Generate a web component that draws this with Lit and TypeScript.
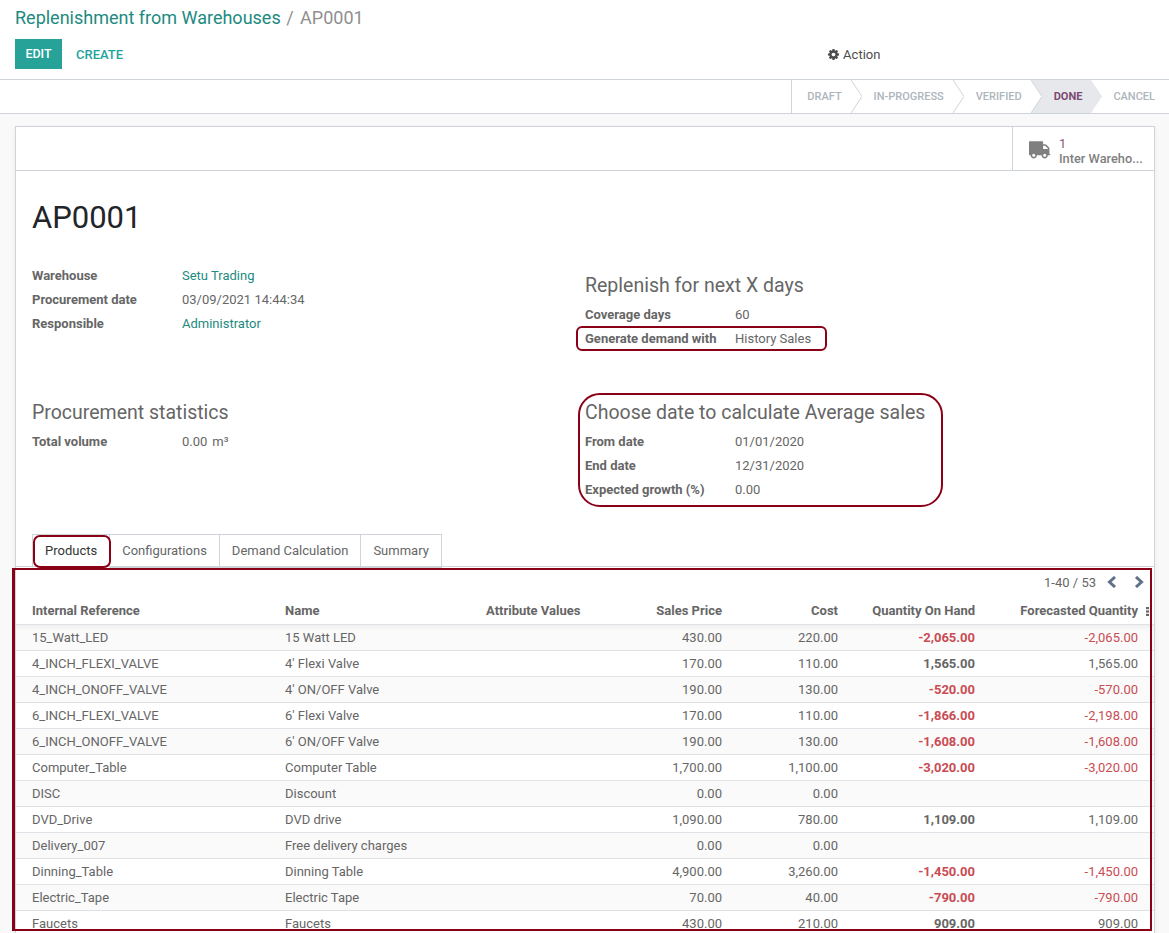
import {LitElement, html, css, svg} from 'lit';
import {customElement} from 'lit/decorators.js';

const GEAR = 'M1152 896q0-106-75-181t-181-75-181 75-75 181 75 181 181 75 181-75 75-181zm512-109v222q0 12-8 23t-20 13l-185 28q-19 54-39 91 35 50 107 138 10 12 10 25t-9 23q-27 37-99 108t-94 71q-12 0-26-9l-138-108q-44 23-91 38-16 136-29 186-7 28-36 28h-222q-14 0-24.5-8.5t-11.5-21.5l-28-184q-49-16-90-37l-141 107q-10 9-25 9-14 0-25-11-126-114-165-168-7-10-7-23 0-12 8-23 15-21 51-66.5t54-70.5q-27-50-41-99l-183-27q-13-2-21-12.5t-8-23.5v-222q0-12 8-23t19-13l186-28q14-46 39-92-40-57-107-138-10-12-10-24 0-10 9-23 26-36 98.5-107.5t94.5-71.5q13 0 26 10l138 107q44-23 91-38 16-136 29-186 7-28 36-28h222q14 0 24.5 8.5t11.5 21.5l28 184q49 16 90 37l142-107q9-9 24-9 13 0 25 10 129 119 165 170 7 8 7 22 0 12-8 23-15 21-51 66.5t-54 70.5q26 50 41 98l183 28q13 2 21 12.5t8 23.5z';
const TRUCK = 'M640 1408q0-52-38-90t-90-38-90 38-38 90 38 90 90 38 90-38 38-90zm-384-512h384v-256h-158q-13 0-22 9l-195 195q-9 9-9 22v30zm1280 512q0-52-38-90t-90-38-90 38-38 90 38 90 90 38 90-38 38-90zm256-1088v1024q0 15-4 26.5t-13.5 18.5-16.5 11.5-23.5 6-22.5 2-25.5 0-22.5-.5q0 106-75 181t-181 75-181-75-75-181h-384q0 106-75 181t-181 75-181-75-75-181h-64q-3 0-22.5.5t-25.5 0-22.5-2-23.5-6-16.5-11.5-13.5-18.5-4-26.5q0-26 19-45t45-19v-320q0-8-.5-35t0-38 2.5-34.5 6.5-37 14-30.5 22.5-30l198-198q19-19 50.5-32t58.5-13h160v-192q0-26 19-45t45-19h1024q26 0 45 19t19 45z';

type Row = [string, string, string, string, string, string];

const ROWS: Row[] = [
  ['15_Watt_LED', '15 Watt LED', '430.00', '220.00', '-2,065.00', '-2,065.00'],
  ['4_INCH_FLEXI_VALVE', "4' Flexi Valve", '170.00', '110.00', '1,565.00', '1,565.00'],
  ['4_INCH_ONOFF_VALVE', "4' ON/OFF Valve", '190.00', '130.00', '-520.00', '-570.00'],
  ['6_INCH_FLEXI_VALVE', "6' Flexi Valve", '170.00', '110.00', '-1,866.00', '-2,198.00'],
  ['6_INCH_ONOFF_VALVE', "6' ON/OFF Valve", '190.00', '130.00', '-1,608.00', '-1,608.00'],
  ['Computer_Table', 'Computer Table', '1,700.00', '1,100.00', '-3,020.00', '-3,020.00'],
  ['DISC', 'Discount', '0.00', '0.00', '', ''],
  ['DVD_Drive', 'DVD drive', '1,090.00', '780.00', '1,109.00', '1,109.00'],
  ['Delivery_007', 'Free delivery charges', '0.00', '0.00', '', ''],
  ['Dinning_Table', 'Dinning Table', '4,900.00', '3,260.00', '-1,450.00', '-1,450.00'],
  ['Electric_Tape', 'Electric Tape', '70.00', '40.00', '-790.00', '-790.00'],
  ['Faucets', 'Faucets', '430.00', '210.00', '909.00', '909.00'],
];

const STAGES = ['DRAFT', 'IN-PROGRESS', 'VERIFIED', 'DONE', 'CANCEL'];

@customElement('app-root')
export class AppRoot extends LitElement {
  static styles = css`
    :host {
      display: block;
      font-family: Roboto, 'Liberation Sans', sans-serif;
      font-size: 13px;
      color: #666;
    }
    .page {
      position: relative;
      height: 933px;
      overflow: hidden;
      background: #f9f9f9;
    }
    .control {
      background: #fff;
      height: 79px;
      box-sizing: content-box;
      border-bottom: 1px solid #ced4da;
      padding: 0 15px;
    }
    .crumbs {
      height: 39px;
      padding-top: 6px;
      box-sizing: border-box;
      font-size: 18px;
      line-height: 24px;
      color: #8f8f8f;
    }
    .crumbs a {
      color: #1d8a80;
    }
    .crumbs span {
      margin: 0 2px 0 1px;
    }
    .buttons {
      display: flex;
      align-items: center;
      height: 30px;
    }
    .edit {
      width: 47px;
      height: 30px;
      line-height: 30px;
      text-align: center;
      background: #26a299;
      color: #fff;
      font-size: 12.5px;
      font-weight: 500;
    }
    .create {
      margin-left: 14px;
      padding-top: 1px;
      color: #21a59d;
      font-size: 13px;
      font-weight: 500;
    }
    .action {
      margin-left: 704px;
      display: flex;
      align-items: center;
      gap: 3px;
      color: #4c4c4c;
      font-size: 13px;
    }
    .action svg {
      width: 13px;
      height: 13px;
      fill: #4c4c4c;
    }
    .statusbar {
      background: #fff;
      height: 33px;
      border-bottom: 1px solid #ced4da;
      display: flex;
      justify-content: flex-end;
    }
    .stages {
      display: flex;
      border-left: 1px solid #ced4da;
    }
    .stage {
      position: relative;
      display: flex;
      align-items: center;
      height: 33px;
      padding: 0 9px 0 23px;
      font-size: 11px;
      font-weight: 500;
      color: #adb5bd;
    }
    .stage:first-child {
      padding-left: 15px;
    }
    .stage.done {
      background: #e6e8eb;
      color: #7c4a72;
      font-weight: 700;
    }
    .stage .tip {
      position: absolute;
      top: 0;
      left: 100%;
      width: 11px;
      height: 33px;
      z-index: 1;
    }
    .stage:last-child {
      padding-left: 22px;
      padding-right: 14px;
    }
    .sheet {
      margin: 12px 14px 0 15px;
      background: #fff;
      border: 1px solid #ced4da;
      box-shadow: 0 2px 5px rgba(0, 0, 0, 0.06);
    }
    .buttonbox {
      height: 43px;
      border-bottom: 1px solid #ced4da;
      display: flex;
      justify-content: flex-end;
    }
    .statbtn {
      width: 142px;
      box-sizing: border-box;
      border-left: 1px solid #ced4da;
      display: flex;
      align-items: center;
      gap: 8px;
      padding-left: 16px;
      font-size: 12.8px;
      font-weight: 500;
      line-height: 15px;
      color: #7f7f7f;
    }
    .statbtn svg {
      width: 22px;
      height: 22px;
      fill: #7f7f7f;
    }
    .statbtn .txt {
      padding-top: 5px;
    }
    .statbtn b {
      display: block;
      font-weight: 400;
      color: #875a7b;
    }
    .body {
      padding: 30px 0 0 16px;
    }
    h1 {
      margin: 0;
      padding-top: 1px;
      height: 31px;
      font-size: 31px;
      font-weight: 400;
      line-height: 32px;
      color: #212529;
    }
    .groups {
      display: grid;
      grid-template-columns: 553px 553px;
    }
    .group {
      height: 133px;
      padding-top: 3px;
    }
    .groups .top {
      height: 125px;
      padding-top: 31px;
    }
    .groups .top-right {
      height: 124px;
      padding-top: 41px;
    }
    h2 {
      margin: 0;
      font-size: 19.5px;
      font-weight: 400;
      line-height: 24px;
      color: #666;
    }
    .field {
      display: grid;
      grid-template-columns: 150px 1fr;
      height: 24px;
      line-height: 24px;
    }
    h2 + .field {
      margin-top: 5px;
    }
    .field label {
      font-weight: 700;
      color: #666;
    }
    .field a {
      color: #1d8a80;
    }
    .unit {
      margin-left: 5px;
    }
    .tabs {
      display: flex;
      margin-left: -16px;
      padding-left: 16px;
      border-bottom: 1px solid #ced4da;
      height: 32px;
    }
    .tab {
      height: 32px;
      line-height: 32px;
      padding: 0 12px;
      border: 1px solid #ced4da;
      border-left: 0;
      color: #666;
    }
    .tab:first-child {
      border-left: 1px solid #ced4da;
    }
    .tab.active {
      color: #333;
      border-bottom-color: #fff;
    }
    .listview {
      margin-left: -16px;
    }
    .pager {
      height: 30px;
      display: flex;
      justify-content: flex-end;
      align-items: center;
      padding-right: 9px;
    }
    .pager svg {
      width: 12px;
      height: 12px;
      fill: none;
      stroke: #5f7288;
      stroke-width: 3;
    }
    .pager svg:first-of-type {
      margin-left: 10px;
    }
    .pager svg + svg {
      margin-left: 15px;
    }
    table {
      width: 1138px;
      table-layout: fixed;
      border-collapse: collapse;
    }
    th,
    td {
      height: 26px;
      padding: 0 16px;
      box-sizing: border-box;
      white-space: nowrap;
      font-size: 13px;
      text-align: left;
      overflow: hidden;
    }
    th {
      font-weight: 700;
      position: relative;
      height: 27px;
      border-bottom: 1px solid #dee2e6;
      color: #666;
    }
    td {
      border-bottom: 1px solid #dee2e6;
      color: #666;
    }
    tbody tr:nth-child(odd) {
      background: #fafafa;
    }
    tbody tr:first-child {
      background: linear-gradient(#efefef, #fafafa 7px);
    }
    .num {
      text-align: right;
    }
    .neg {
      color: #c94c54;
    }
    .strong {
      font-weight: 700;
    }
    .dots {
      position: absolute;
      right: 5px;
      top: 10px;
      width: 3px;
      height: 9px;
      fill: #666;
    }
    .mark {
      position: absolute;
      box-sizing: border-box;
      border: 2px solid #8a0017;
      pointer-events: none;
    }
    .m-table {
      left: 12px;
      top: 568px;
      width: 1140px;
      height: 363px;
      border-left-width: 3px;
    }
    .m-tab {
      left: 33px;
      top: 535px;
      width: 78px;
      height: 33px;
      border-radius: 7px;
    }
    .m-gen {
      left: 576px;
      top: 326px;
      width: 251px;
      height: 25px;
      border-radius: 6px;
    }
    .m-avg {
      left: 578px;
      top: 393px;
      width: 365px;
      height: 114px;
      border-radius: 22px;
    }
  `;

  renderChevron(filled: boolean) {
    return html`<svg class="tip" viewBox="0 0 11 33">
      ${filled
        ? svg`<path d="M0 0 L11 16.5 L0 33 Z" fill="#e6e8eb" />`
        : svg`<path d="M0 0 L11 16.5 L0 33" fill="#fff" stroke="#ced4da" />`}
    </svg>`;
  }

  renderField(label: string, value: unknown) {
    return html`<div class="field"><label>${label}</label><div>${value}</div></div>`;
  }

  renderQty(value: string, bold: boolean) {
    const neg = value.startsWith('-');
    return html`<td class="num ${neg ? 'neg' : ''} ${bold ? 'strong' : ''}">${value}</td>`;
  }

  render() {
    return html`
      <div class="page">
        <div class="control">
          <div class="crumbs"><a>Replenishment from Warehouses</a><span> / </span>AP0001</div>
          <div class="buttons">
            <div class="edit">EDIT</div>
            <div class="create">CREATE</div>
            <div class="action">
              <svg viewBox="0 0 1792 1792"><path d=${GEAR} /></svg>Action
            </div>
          </div>
        </div>
        <div class="statusbar">
          <div class="stages">
            ${STAGES.map(
              (s, i) => html`<div class="stage ${s === 'DONE' ? 'done' : ''}">
                ${s}${i < STAGES.length - 1 ? this.renderChevron(s === 'DONE') : ''}
              </div>`
            )}
          </div>
        </div>
        <div class="sheet">
          <div class="buttonbox">
            <div class="statbtn">
              <svg viewBox="0 0 1792 1792"><path d=${TRUCK} transform="matrix(-1 0 0 1 1792 0)" /></svg>
              <div class="txt"><b>1</b>Inter Wareho...</div>
            </div>
          </div>
          <div class="body">
            <h1>AP0001</h1>
            <div class="groups">
              <div class="group top">
                ${this.renderField('Warehouse', html`<a>Setu Trading</a>`)}
                ${this.renderField('Procurement date', '03/09/2021 14:44:34')}
                ${this.renderField('Responsible', html`<a>Administrator</a>`)}
              </div>
              <div class="group top-right">
                <h2>Replenish for next X days</h2>
                ${this.renderField('Coverage days', '60')}
                ${this.renderField('Generate demand with', 'History Sales')}
              </div>
              <div class="group">
                <h2>Procurement statistics</h2>
                ${this.renderField('Total volume', html`0.00<span class="unit">m³</span>`)}
              </div>
              <div class="group">
                <h2>Choose date to calculate Average sales</h2>
                ${this.renderField('From date', '01/01/2020')}
                ${this.renderField('End date', '12/31/2020')}
                ${this.renderField('Expected growth (%)', '0.00')}
              </div>
            </div>
            <div class="tabs">
              <div class="tab active">Products</div>
              <div class="tab">Configurations</div>
              <div class="tab">Demand Calculation</div>
              <div class="tab">Summary</div>
            </div>
            <div class="listview">
              <div class="pager">
                1-40 / 53
                <svg viewBox="0 0 12 12"><path d="M9 1 L3.5 6 L9 11" /></svg>
                <svg viewBox="0 0 12 12"><path d="M3 1 L8.5 6 L3 11" /></svg>
              </div>
              <table>
                <colgroup>
                  <col style="width:253px" />
                  <col style="width:201px" />
                  <col style="width:140px" />
                  <col style="width:128px" />
                  <col style="width:116px" />
                  <col style="width:137px" />
                  <col style="width:163px" />
                </colgroup>
                <thead>
                  <tr>
                    <th>Internal Reference</th>
                    <th>Name</th>
                    <th>Attribute Values</th>
                    <th class="num">Sales Price</th>
                    <th class="num">Cost</th>
                    <th class="num">Quantity On Hand</th>
                    <th class="num">
                      Forecasted Quantity
                      <svg class="dots" viewBox="0 0 3 9">
                        <rect width="3" height="2.2" /><rect y="3.4" width="3" height="2.2" /><rect y="6.8" width="3" height="2.2" />
                      </svg>
                    </th>
                  </tr>
                </thead>
                <tbody>
                  ${ROWS.map(
                    r => html`<tr>
                      <td>${r[0]}</td>
                      <td>${r[1]}</td>
                      <td></td>
                      <td class="num">${r[2]}</td>
                      <td class="num">${r[3]}</td>
                      ${this.renderQty(r[4], true)}
                      ${this.renderQty(r[5], false)}
                    </tr>`
                  )}
                </tbody>
              </table>
            </div>
          </div>
        </div>
        <div class="mark m-gen"></div>
        <div class="mark m-avg"></div>
        <div class="mark m-tab"></div>
        <div class="mark m-table"></div>
      </div>
    `;
  }
}
